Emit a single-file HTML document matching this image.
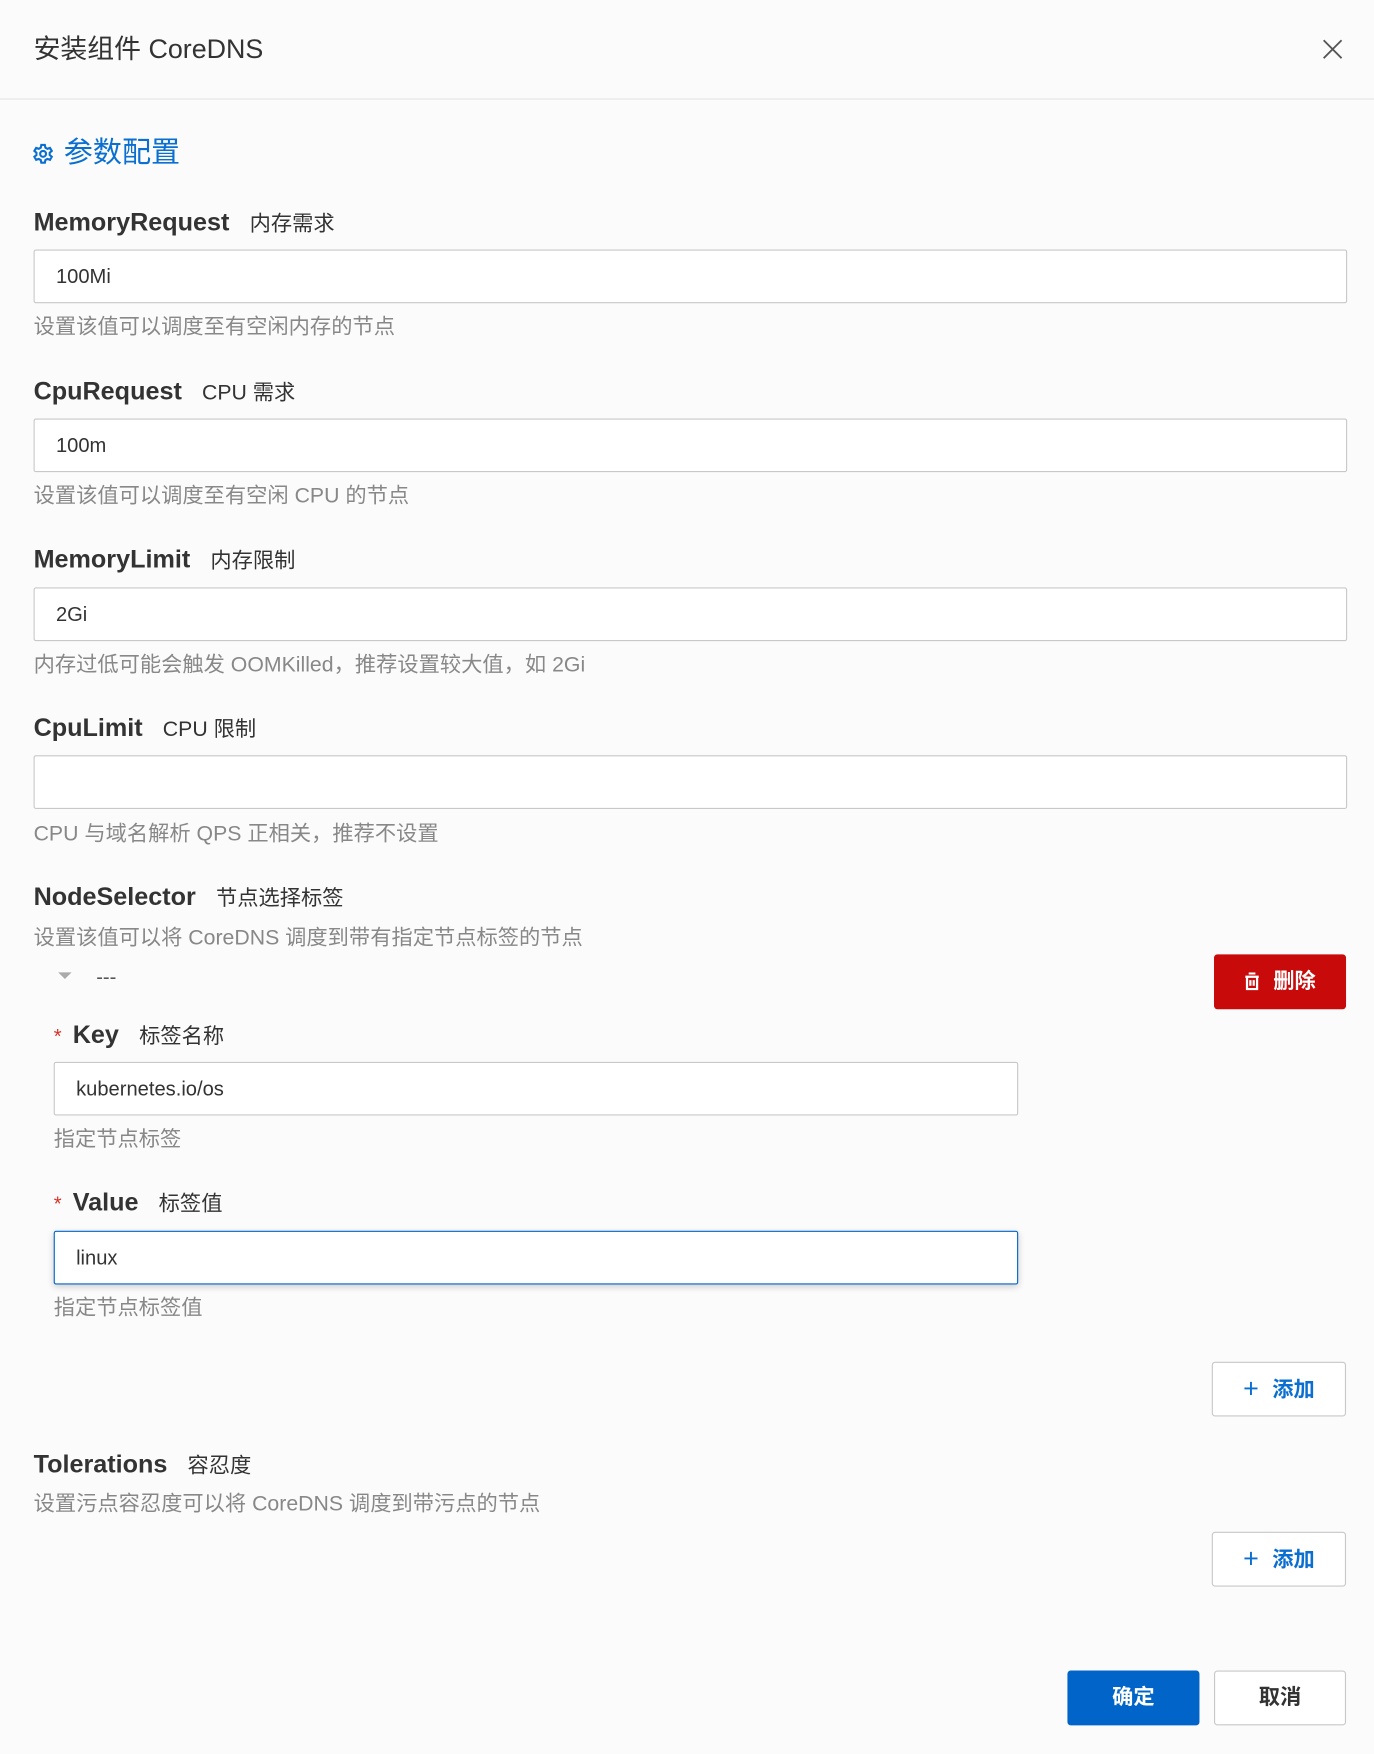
<!DOCTYPE html>
<html><head><meta charset="utf-8">
<style>
html,body{margin:0;padding:0;}
body{width:1374px;height:1754px;overflow:hidden;background:#fbfbfb;font-family:"Liberation Sans","Noto Sans CJK SC",sans-serif;}
#r{position:absolute;left:0;top:0;width:1228px;height:1568px;transform:scale(1.1189);transform-origin:0 0;}
.a{position:absolute;white-space:nowrap;}
.lbl{font-size:22.5px;color:#333;font-weight:600;line-height:28px;}
.lbl span{font-size:19px;font-weight:400;margin-left:18px;}
.inp{position:absolute;height:48px;background:#fff;border:1px solid #c8c8c8;border-radius:2px;box-sizing:border-box;font-size:18px;color:#333;line-height:46px;padding-left:19px;}
.help{font-size:19px;color:#888;line-height:24px;}
.btn{position:absolute;height:49px;box-sizing:border-box;border-radius:3px;font-size:19px;font-weight:700;text-align:center;line-height:47px;}
.lbl .star{color:#d93026;font-size:18px;margin-left:0;margin-right:10px;font-weight:400;}
</style></head><body><div id="r">
<div class="a" style="left:30px;top:30px;font-size:24px;color:#333;line-height:30px;">安装组件 CoreDNS</div>
<svg class="a" style="left:1182px;top:35px" width="18" height="18" viewBox="0 0 18 18"><path d="M1 1L17 17M17 1L1 17" stroke="#555" stroke-width="1.6"/></svg>
<div class="a" style="left:0;top:88px;width:1228px;height:1px;background:#e3e3e3"></div>
<svg class="a" style="left:29px;top:128px" width="19" height="19" viewBox="0 0 24 24"><path fill="none" stroke="#0a6fd0" stroke-width="2.4" d="M10 2h4l.6 3 2.3 1.3 2.9-1 2 3.4-2.3 2v2.6l2.3 2-2 3.4-2.9-1-2.3 1.3L14 22h-4l-.6-3-2.3-1.3-2.9 1-2-3.4 2.3-2v-2.6l-2.3-2 2-3.4 2.9 1L9.4 5z"/><circle cx="12" cy="12" r="3.3" fill="none" stroke="#0a6fd0" stroke-width="2.4"/></svg>
<div class="a" style="left:57px;top:120px;font-size:26px;color:#0a6fd0;line-height:32px;">参数配置</div>

<div class="a lbl" style="left:30px;top:185px">MemoryRequest<span>内存需求</span></div>
<div class="inp" style="left:30px;top:223px;width:1174px">100Mi</div>
<div class="a help" style="left:30px;top:281px">设置该值可以调度至有空闲内存的节点</div>

<div class="a lbl" style="left:30px;top:336px">CpuRequest<span>CPU 需求</span></div>
<div class="inp" style="left:30px;top:374px;width:1174px">100m</div>
<div class="a help" style="left:30px;top:432px">设置该值可以调度至有空闲 CPU 的节点</div>

<div class="a lbl" style="left:30px;top:486px">MemoryLimit<span>内存限制</span></div>
<div class="inp" style="left:30px;top:525px;width:1174px">2Gi</div>
<div class="a help" style="left:30px;top:583px">内存过低可能会触发 OOMKilled，推荐设置较大值，如 2Gi</div>

<div class="a lbl" style="left:30px;top:637px">CpuLimit<span>CPU 限制</span></div>
<div class="inp" style="left:30px;top:675px;width:1174px"></div>
<div class="a help" style="left:30px;top:734px">CPU 与域名解析 QPS 正相关，推荐不设置</div>

<div class="a lbl" style="left:30px;top:788px">NodeSelector<span>节点选择标签</span></div>
<div class="a help" style="left:30px;top:827px">设置该值可以将 CoreDNS 调度到带有指定节点标签的节点</div>
<div class="a" style="left:52px;top:869px;width:0;height:0;border-left:6px solid transparent;border-right:6px solid transparent;border-top:6px solid #aaa"></div>
<div class="a" style="left:86px;top:862px;font-size:18px;color:#555;line-height:22px">---</div>
<div class="btn" style="left:1085px;top:853px;width:118px;background:#c80a0a;color:#fff;border:none;line-height:49px"><svg style="vertical-align:-2px;margin-right:12px" width="14" height="16" viewBox="0 0 14 16"><path d="M4 1h6M1 4h12M2.5 4v11h9V4M5.5 7v5M8.5 7v5" fill="none" stroke="#fff" stroke-width="2"/></svg>删除</div>

<div class="a lbl" style="left:48px;top:911px"><span class="star">*</span>Key<span>标签名称</span></div>
<div class="inp" style="left:48px;top:949px;width:862px">kubernetes.io/os</div>
<div class="a help" style="left:48px;top:1007px">指定节点标签</div>

<div class="a lbl" style="left:48px;top:1061px"><span class="star">*</span>Value<span>标签值</span></div>
<div class="inp" style="left:48px;top:1100px;width:862px;border-color:#0064c8;box-shadow:0 2px 6px rgba(0,0,0,0.18)">linux</div>
<div class="a help" style="left:48px;top:1158px">指定节点标签值</div>

<div class="btn" style="left:1083px;top:1217px;width:120px;background:#fff;border:1px solid #c8c8c8;color:#0a6fd0"><span style="font-weight:300;font-size:24px;margin-right:12px;vertical-align:-1px">+</span>添加</div>

<div class="a lbl" style="left:30px;top:1295px">Tolerations<span>容忍度</span></div>
<div class="a help" style="left:30px;top:1333px">设置污点容忍度可以将 CoreDNS 调度到带污点的节点</div>
<div class="btn" style="left:1083px;top:1369px;width:120px;background:#fff;border:1px solid #c8c8c8;color:#0a6fd0"><span style="font-weight:300;font-size:24px;margin-right:12px;vertical-align:-1px">+</span>添加</div>

<div class="btn" style="left:954px;top:1493px;width:118px;background:#0064c8;color:#fff;border:none;line-height:49px">确定</div>
<div class="btn" style="left:1085px;top:1493px;width:118px;background:#fff;border:1px solid #c8c8c8;color:#333">取消</div>
</div></body></html>
